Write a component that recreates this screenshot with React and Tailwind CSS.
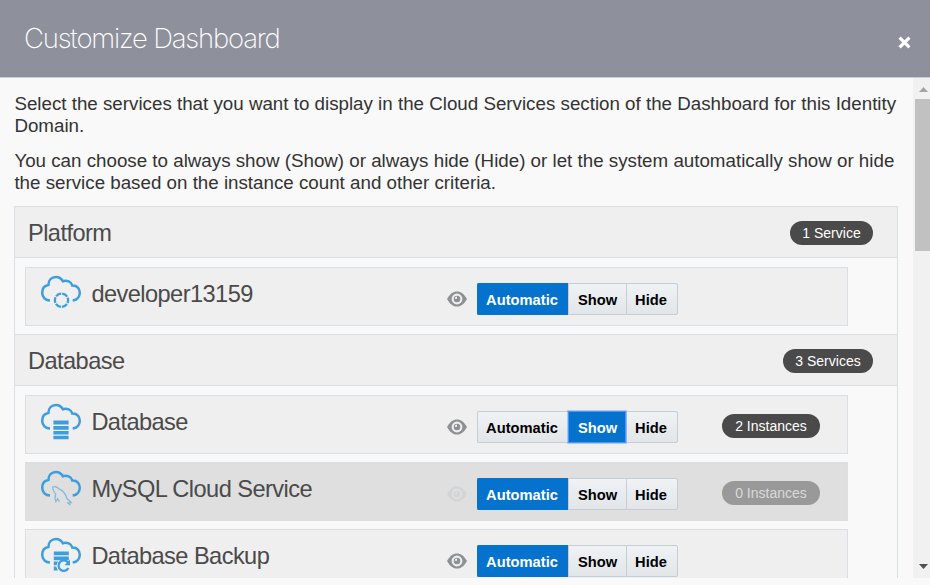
import React from "react";

const BLUE = "#3d9edd";

function CloudIcon({ kind }) {
  return (
    <svg width="44" height="40" viewBox="0 0 44 40" fill="none" className="block shrink-0">
      <path
        d="M11 28.6C6.5 28.6 3.2 25.4 3.2 20.8C3.2 16.5 5.6 13.6 9.4 13C9.4 8 12.7 4.9 17 4.9C20 4.9 22.4 6.5 23.8 9.2C27.8 7.8 32.4 9.8 33.4 13.6C38.2 13.4 40.8 16.7 40.8 20.8C40.8 25 37.8 28 33.7 28.5"
        stroke={BLUE}
        strokeWidth="2.5"
      />
      {kind === "platform" && (
        <circle cx="22.5" cy="28.2" r="6.6" stroke={BLUE} strokeWidth="2.3" strokeDasharray="5.9 1.01" strokeDashoffset="2.9" />
      )}
      {kind === "database" && (
        <path d="M14.4 20.6h15.2v4H14.4zM14.4 26h15.2v3.7H14.4zM14.4 31h15.2v3.4H14.4zM14.4 35.8h15.2v3.4H14.4z" fill={BLUE} />
      )}
      {kind === "mysql" && (
        <path
          d="M20.4 34.6L18.6 31.6L16.8 34.5C15.6 31 15.7 29.5 16.8 27.4C15 25 13.6 22 13.7 20.1C16.2 18.9 19 20.6 20.7 22.4C25 23.6 26.5 27.3 28 31.4C29.2 33.2 31 33.3 32.3 35.7L28.8 36L31.5 38"
          stroke="#7fb7dd"
          strokeWidth="1.2"
        />
      )}
      {kind === "backup" && (
        <>
          <path d="M14.8 17.6h15v3.7h-15zM14.8 22.5h15v3.7h-15zM14.8 27.4h4.2l-1.5 3.8h-2.7zM14.8 32.5h2.4l1.6 3.9h-4z" fill={BLUE} />
          <path d="M29 28.6A5.2 5.2 0 1 0 29.4 34" stroke={BLUE} strokeWidth="2.3" />
          <path d="M31 25.6v5.6h-5.6z" fill={BLUE} />
        </>
      )}
    </svg>
  );
}

function Eye({ faded }) {
  return (
    <svg width="20" height="16" viewBox="0 0 20 16" className="block shrink-0" fill={faded ? "#d3d4d5" : "#8d9194"}>
      <path
        fillRule="evenodd"
        d="M0 8C3 2.7 6.2.4 10 .4S17 2.7 20 8C17 13.3 13.8 15.6 10 15.6S3 13.3 0 8ZM10 2.6a5.4 5.4 0 1 0 0 10.8a5.4 5.4 0 1 0 0-10.8Z"
      />
      <path fillRule="evenodd" d="M10 4.7a3.3 3.3 0 1 0 0 6.6a3.3 3.3 0 1 0 0-6.6ZM10 5.5v2.3H7.7a2.3 2.3 0 0 1 2.3-2.3Z" />
    </svg>
  );
}

function Toggle({ value }) {
  const options = [
    ["Automatic", "w-[91px] rounded-l-[2px] border-l pr-[2px]"],
    ["Show", "w-[58px] border-l"],
    ["Hide", "w-[52px] rounded-r-[2px] border-x pr-[2px]"],
  ];
  return (
    <div className="flex h-8 w-[201px] text-[14.7px] font-bold">
      {options.map(([label, shape]) => {
        const on = label === value;
        const focus = on && label === "Show";
        return (
          <button
            key={label}
            className={`flex items-center justify-center border-y pt-[2px] whitespace-nowrap ${shape} ${
              on
                ? "border-[#0572ce] bg-[#0572ce] text-white"
                : "border-[#c4ced7] bg-linear-to-b from-[#f0f2f4] to-[#e2e6e9] text-black"
            } ${focus ? "z-10 outline-1 -outline-offset-1 outline-[#4d90fe] ring-1 ring-[#4d90fe]/40" : ""}`}
          >
            {label}
          </button>
        );
      })}
    </div>
  );
}

function Badge({ children, width, faded }) {
  return (
    <span
      className={`flex h-6 items-center justify-center rounded-full text-[14px] whitespace-nowrap ${width} ${
        faded ? "bg-[#999999] text-[#d9d9d9]" : "bg-[#4a4a4a] text-white"
      }`}
    >
      {children}
    </span>
  );
}

function SectionHeader({ title, count, width }) {
  return (
    <div className="flex h-[52px] items-center justify-between border-y border-[#dadfe3] bg-[#efefef] pt-[2px] pr-6 pl-[13px]">
      <h2 className="text-[23.6px] leading-7 tracking-[-0.56px]">{title}</h2>
      <Badge width={width}>{count}</Badge>
    </div>
  );
}

function ServiceRow({ name, kind, value, instances, faded }) {
  return (
    <div
      className={`flex h-[59px] w-[823px] shrink-0 border ${
        faded ? "border-[#dcdfe1] bg-[#dfdfdf]" : "border-[#dadfe3] bg-[#efefef]"
      }`}
    >
      <div className="flex w-[421px] pt-[4px] pl-[13px]">
        <CloudIcon kind={kind} />
        <span className="pt-[8px] pl-[8.4px] text-[23.6px] leading-7 tracking-[-0.56px] whitespace-nowrap">{name}</span>
      </div>
      <div className="mt-[15px] flex h-8 items-center gap-[10px] self-start">
        <Eye faded={faded} />
        <Toggle value={value} />
      </div>
      {instances && (
        <div className="mt-[18px] ml-[44px]">
          <Badge width="w-[98px]" faded={faded}>
            {instances}
          </Badge>
        </div>
      )}
    </div>
  );
}

export default function App() {
  return (
    <div className="flex h-[585px] w-[930px] flex-col overflow-hidden bg-[#f9f9f9] font-['Liberation_Sans',Arial,sans-serif] text-[#4a4a4a]">
      <header className="flex h-[78px] shrink-0 items-center justify-between border-b border-[#c4ced7] bg-[#8e909c] pr-[19px] pl-6">
        <h1 className="font-['Inter',sans-serif] text-[27.5px] font-extralight tracking-[-1.2px] whitespace-nowrap text-white">
          Customize Dashboard
        </h1>
        <svg width="13" height="13" viewBox="0 0 14 14" className="mt-[8px]" stroke="white" strokeWidth="3.4">
          <path d="M1.7 1.7L12.3 12.3M12.3 1.7L1.7 12.3" />
        </svg>
      </header>
      <div className="flex h-[500px] shrink-0">
        <main className="w-[913px] overflow-hidden pt-[15px] pl-[14px]">
          <p className="pl-[0.4px] text-[18.75px] leading-[22px] whitespace-nowrap text-[#333333]">
            Select the services that you want to display in the Cloud Services section of the Dashboard for this Identity
            <br />
            Domain.
          </p>
          <p className="mt-[13px] pl-[0.4px] text-[18.75px] leading-[22px] whitespace-nowrap text-[#333333]">
            You can choose to always show (Show) or always hide (Hide) or let the system automatically show or hide
            <br />
            the service based on the instance count and other criteria.
          </p>
          <div className="mt-[12px] w-[884px] border-x border-[#dadfe3]">
            <SectionHeader title="Platform" count="1 Service" width="w-[83px]" />
            <div className="flex flex-col px-[10px] pt-[9px] pb-[8px]">
              <ServiceRow name="developer13159" kind="platform" value="Automatic" />
            </div>
            <SectionHeader title="Database" count="3 Services" width="w-[90px]" />
            <div className="flex flex-col gap-2 px-[10px] pt-[9px] pb-[8px]">
              <ServiceRow name="Database" kind="database" value="Show" instances="2 Instances" />
              <ServiceRow name="MySQL Cloud Service" kind="mysql" value="Automatic" instances="0 Instances" faded />
              <ServiceRow name="Database Backup" kind="backup" value="Automatic" />
            </div>
          </div>
        </main>
        <div className="flex w-[17px] flex-col bg-[#f1f1f1] pl-[2px]">
          <svg width="15" height="21" viewBox="0 0 15 21">
            <path d="M4 14h9L8.5 9z" fill="#a3a3a3" />
          </svg>
          <div className="h-[152px] bg-[#c1c1c1]" />
          <svg width="15" height="21" viewBox="0 0 15 21" className="mt-auto">
            <path d="M4 7h9L8.5 12z" fill="#505050" />
          </svg>
        </div>
      </div>
    </div>
  );
}
